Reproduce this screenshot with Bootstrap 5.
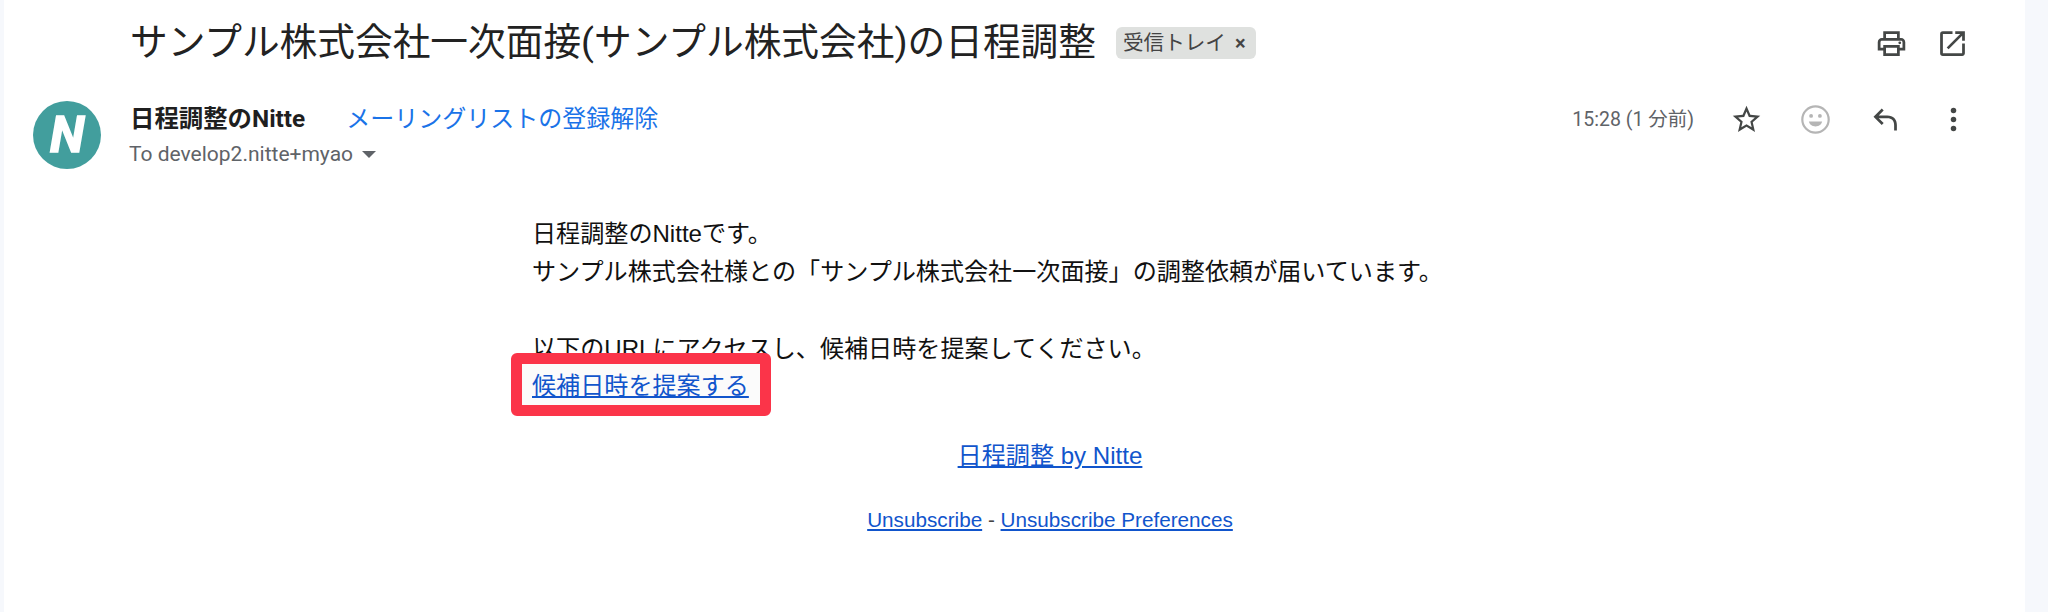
<!DOCTYPE html>
<html lang="ja">
<head>
    <meta charset="UTF-8">
    <meta name="viewport" content="width=device-width, initial-scale=1.0">
    <title>サンプル株式会社一次面接の日程調整</title>
    <link href="https://cdn.jsdelivr.net/npm/bootstrap@5.3.0/dist/css/bootstrap.min.css" rel="stylesheet">
    <style>
        html, body { height: 100%; }
        body { background: #f6f8fc; font-family: Roboto, "Noto Sans CJK JP", sans-serif; color: #202124; overflow: hidden; }
        .mail-pane { background: #fff; margin-left: 4px; margin-right: 23px; height: 612px; }
        .subject-row { padding: 13px 0 0 126px; height: 78px; }
        .subject { font-size: 37.7px; line-height: 58px; font-weight: 400; margin: 0; color: #222; white-space: nowrap; }
        .inbox-tag { background: #dfe1df; color: #444; border-radius: 6px; font-size: 20.6px; height: 32px; line-height: 32px; width: 140px; padding-left: 7px; margin-left: 20px; margin-top: 14px; white-space: nowrap; }
        .inbox-tag i { font-style: normal; font-size: 20px; font-weight: 700; margin-left: 9px; }
        .head-icons { margin-left: auto; margin-right: 56px; gap: 28px; margin-top: 14px; }
        .tool-ico { width: 33px; height: 33px; fill: #444746; flex: none; }
        .sender-row { height: 91px; }
        .avatar { width: 68px; height: 68px; background: #429e9d; border-radius: 50%; color: #fff; margin: 23px 29px 0 29px; font: italic 700 50px/68px Roboto, sans-serif; text-align: center; -webkit-text-stroke: 1.5px #fff; flex: none; }
        .sender-name { font-size: 24.4px; font-weight: 700; line-height: 30px; color: #1f1f1f; }
        .unsub-link { font-size: 24px; line-height: 30px; color: #1a73e8; text-decoration: none; margin-left: 41px; }
        .to-line { font-size: 21px; line-height: 28px; color: #5f6368; margin-top: 6px; margin-left: -1px; }
        .to-caret { display: inline-block; border-left: 7px solid transparent; border-right: 7px solid transparent; border-top: 7px solid #5f6368; margin-left: 9px; vertical-align: 3px; }
        .sender-text { padding-top: 26px; }
        .sender-side { margin-left: auto; margin-right: 55px; padding-top: 25px; }
        .sent-time { font-size: 19.5px; color: #5f6368; line-height: 28px; margin-right: 36px; }
        .side-icons { gap: 36px; }
        .mail-body { margin-left: 531px; width: 1030px; padding-top: 46px; font-family: "Liberation Sans", "Noto Sans CJK JP", sans-serif; font-size: 24.1px; line-height: 38.2px; color: #111; }
        .mail-body a { color: #1155cc; }
        .body-lines { margin-left: -3px; }
        .link-line { position: relative; margin-top: -1px; }
        .red-box { position: absolute; left: -21px; top: -14px; width: 260px; height: 63px; border: 11px solid #fb3449; border-radius: 6px; background: #fbfbfb; z-index: 1; }
        .link-line a { position: relative; z-index: 2; }
        .by-line { margin-top: 32px; }
        .unsub-line { margin-top: 31px; font-size: 20.7px; line-height: 28px; color: #444; }
    </style>
</head>
<body>
    <div class="mail-pane">
        <div class="subject-row d-flex align-items-start">
            <h2 class="subject">サンプル株式会社一次面接(サンプル株式会社)の日程調整</h2>
            <span class="inbox-tag">受信トレイ<i>×</i></span>
            <div class="head-icons d-flex align-items-center">
                <svg class="tool-ico" viewBox="0 0 24 24"><path d="M19 8h-1V3H6v5H5c-1.66 0-3 1.34-3 3v6h4v4h12v-4h4v-6c0-1.66-1.34-3-3-3zM8 5h8v3H8V5zm8 14H8v-4h8v4zm4-4h-2v-2H6v2H4v-4c0-.55.45-1 1-1h14c.55 0 1 .45 1 1v4z"/><circle cx="18" cy="11.5" r="1"/></svg>
                <svg class="tool-ico" viewBox="0 0 24 24"><path d="M19 19H5V5h7V3H5a2 2 0 0 0-2 2v14a2 2 0 0 0 2 2h14c1.1 0 2-.9 2-2v-7h-2v7zM14 3v2h3.59l-9.83 9.83 1.41 1.41L19 6.41V10h2V3h-7z"/></svg>
            </div>
        </div>

        <div class="sender-row d-flex align-items-start">
            <div class="avatar">N</div>
            <div class="sender-text">
                <div class="d-flex">
                    <span class="sender-name">日程調整のNitte</span>
                    <a class="unsub-link" href="#">メーリングリストの登録解除</a>
                </div>
                <div class="to-line">To develop2.nitte+myao<span class="to-caret"></span></div>
            </div>
            <div class="sender-side d-flex align-items-center">
                <span class="sent-time">15:28 (1 分前)</span>
                <div class="side-icons d-flex align-items-center">
                    <svg class="tool-ico" viewBox="0 0 24 24"><path d="M22 9.24l-7.19-.62L12 2 9.19 8.63 2 9.24l5.46 4.73L5.82 21 12 17.27 18.18 21l-1.63-7.03L22 9.24zM12 15.4l-3.76 2.27 1-4.28-3.32-2.88 4.38-.38L12 6.1l1.71 4.04 4.38.38-3.32 2.88 1 4.28L12 15.4z"/></svg>
                    <svg class="tool-ico" viewBox="0 0 24 24"><circle cx="12" cy="12" r="9.6" fill="none" stroke="#b5b5b5" stroke-width="1.6"/><circle cx="8.8" cy="9.4" r="1.4" fill="#b5b5b5"/><circle cx="15.2" cy="9.4" r="1.4" fill="#b5b5b5"/><path d="M7.2 13.4h9.6c-.4 2.2-2.4 3.6-4.8 3.6s-4.4-1.4-4.8-3.6z" fill="#b5b5b5"/></svg>
                    <svg class="tool-ico" viewBox="0 0 24 24"><path d="M21 20h-2v-4c0-3.3-1.7-5-5-5H7.8l3.6 3.6L10 16l-6-6 6-6 1.4 1.4L7.8 9H14c4.4 0 7 2.6 7 7z"/></svg>
                    <svg class="tool-ico" viewBox="0 0 24 24"><circle cx="12" cy="5.5" r="2"/><circle cx="12" cy="12" r="2"/><circle cx="12" cy="18.5" r="2"/></svg>
                </div>
            </div>
        </div>

        <div class="mail-body">
            <div class="body-lines">
                <div>日程調整のNitteです。</div>
                <div>サンプル株式会社様との「サンプル株式会社一次面接」の調整依頼が届いています。</div>
                <div>&nbsp;</div>
                <div>以下のURLにアクセスし、候補日時を提案してください。</div>
                <div class="link-line"><span class="red-box"></span><a href="#">候補日時を提案する</a></div>
            </div>
            <div class="by-line text-center"><a href="#">日程調整 by Nitte</a></div>
            <div class="unsub-line text-center"><a href="#">Unsubscribe</a> - <a href="#">Unsubscribe Preferences</a></div>
        </div>
    </div>
    <script src="https://cdn.jsdelivr.net/npm/bootstrap@5.3.0/dist/js/bootstrap.bundle.min.js"></script>
</body>
</html>
